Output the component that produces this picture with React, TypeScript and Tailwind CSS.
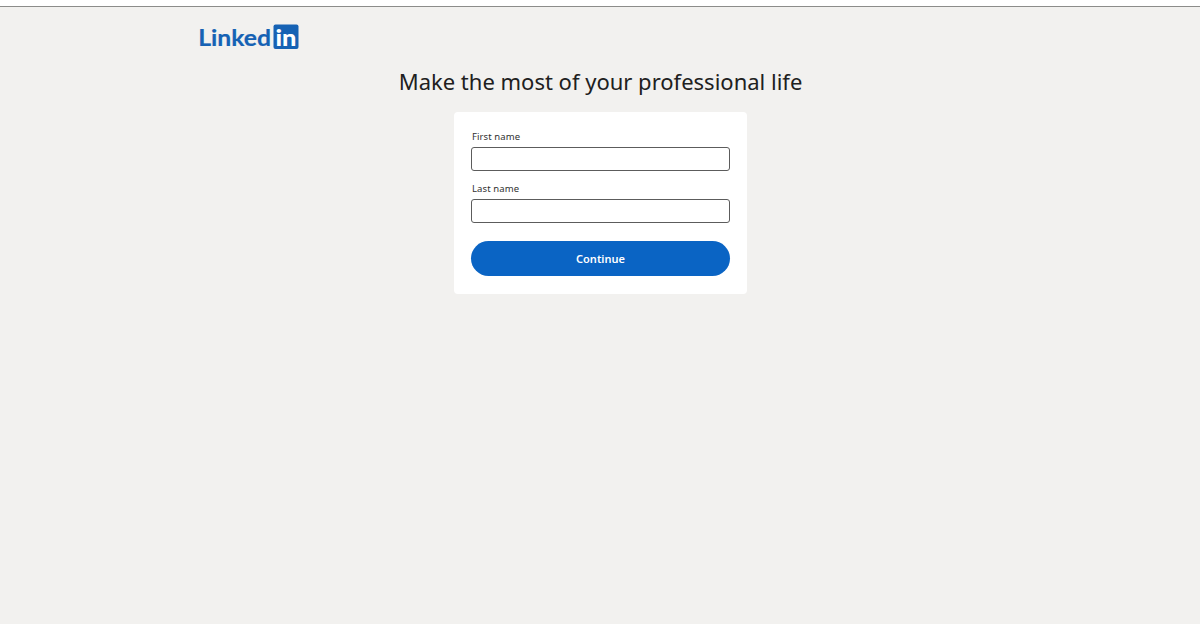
import { useState } from "react";

type TextFieldProps = {
  id: string;
  label: string;
  value: string;
  onChange: (value: string) => void;
};

function Logo() {
  return (
    <svg
      width="104"
      height="34"
      viewBox="-2 -4 104 34"
      role="img"
      aria-label="LinkedIn"
      className="block font-['Lato',sans-serif] font-bold"
    >
      <text
        x="-0.8"
        y="21.5"
        fontSize="23.5"
        textLength="72.8"
        lengthAdjust="spacingAndGlyphs"
        fill="#1662b4"
        stroke="#1662b4"
        strokeWidth="0.2"
      >
        Linked
      </text>
      <rect x="74.5" y="0.5" width="25" height="24.5" rx="2" fill="#1662b4" />
      <text
        x="76.5"
        y="21.5"
        fontSize="23"
        textLength="21"
        lengthAdjust="spacingAndGlyphs"
        fill="#ffffff"
        className="font-black"
      >
        in
      </text>
    </svg>
  );
}

function TextField({ id, label, value, onChange }: TextFieldProps) {
  return (
    <div>
      <label
        htmlFor={id}
        className="block h-[17px] pl-px text-[9.5px] leading-[14px] tracking-[0.1px] text-[#303030]"
      >
        {label}
      </label>
      <input
        id={id}
        type="text"
        value={value}
        onChange={(e) => onChange(e.target.value)}
        className="block h-6 w-full rounded-[3px] border border-[#5c5c5c] bg-white px-2 text-xs focus:outline-none"
      />
    </div>
  );
}

export default function App() {
  const [firstName, setFirstName] = useState("");
  const [lastName, setLastName] = useState("");

  return (
    <div className="h-[630px] bg-white pt-1.5 font-['Noto_Sans',sans-serif]">
      <div className="flex h-[618px] flex-col border-t border-[#8c8c8a] bg-[#f2f1ef]">
        <header className="pl-[197px] pt-[13px]">
          <Logo />
        </header>
        <main className="flex flex-col items-center pl-px pt-[9px]">
          <h1 className="whitespace-nowrap text-[22px] leading-9 text-[#202020]">
            Make the most of your professional life
          </h1>
          <form
            onSubmit={(e) => e.preventDefault()}
            className="mt-[13px] h-[182px] w-[293px] rounded bg-white px-[17px] pt-[18px]"
          >
            <div className="flex flex-col gap-[11px]">
              <TextField
                id="first-name"
                label="First name"
                value={firstName}
                onChange={setFirstName}
              />
              <TextField
                id="last-name"
                label="Last name"
                value={lastName}
                onChange={setLastName}
              />
            </div>
            <button
              type="submit"
              className="mt-[18px] block h-[35px] w-full rounded-full bg-[#0a64c4] pt-0.5 text-[11px] font-semibold text-white"
            >
              Continue
            </button>
          </form>
        </main>
      </div>
    </div>
  );
}
